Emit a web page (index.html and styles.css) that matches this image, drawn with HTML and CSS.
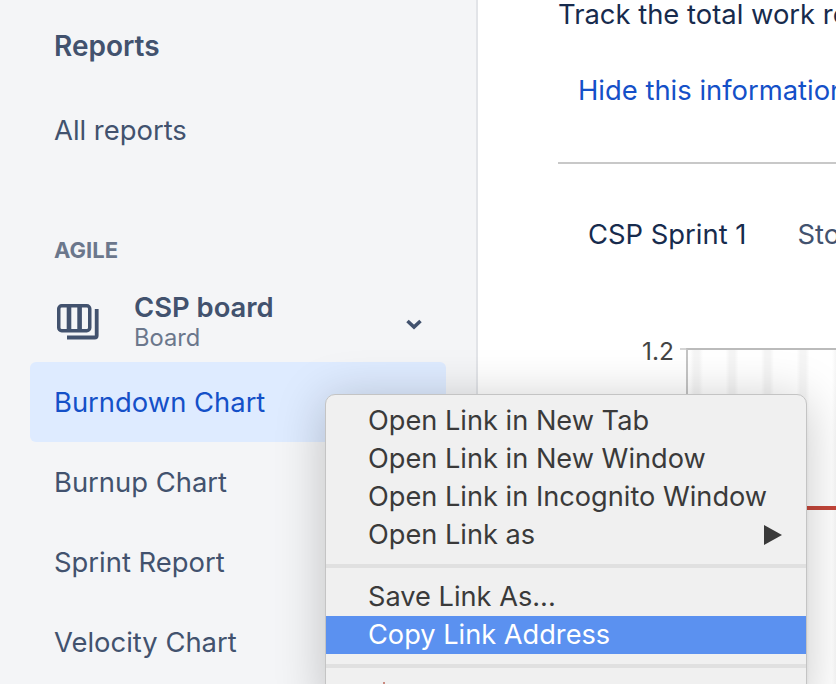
FILE: index.html
```html
<!DOCTYPE html>
<html lang="en">
<head>
<meta charset="utf-8">
<title>Burndown Chart</title>
<link rel="stylesheet" href="styles.css">
</head>
<body>
<div class="page">
  <nav class="sidebar">
    <h2 class="nav-title">Reports</h2>
    <a class="nav-item all">All reports</a>
    <div class="group-label">AGILE</div>
    <div class="board">
      <svg class="board-icon" width="46" height="40" viewBox="0 0 46 40" aria-hidden="true">
        <rect x="2.750" y="2.750" width="31" height="25" rx="3" fill="none" stroke="#42526e" stroke-width="3.500"/>
        <path d="M13 3v25M23.600 3v25" stroke="#42526e" stroke-width="4.600"/>
        <path d="M40.700 6V32.500a2 2 0 0 1-2 2H11" fill="none" stroke="#42526e" stroke-width="3.800"/>
      </svg>
      <div class="board-text">
        <div class="board-name">CSP board</div>
        <div class="board-sub">Board</div>
      </div>
      <svg class="chevron" width="18" height="12" viewBox="0 0 18 12" aria-hidden="true">
        <path d="M2.500 3 9 9l6.500-6" fill="none" stroke="#42526e" stroke-width="3.600"/>
      </svg>
    </div>
    <a class="nav-item active">Burndown Chart</a>
    <a class="nav-item">Burnup Chart</a>
    <a class="nav-item">Sprint Report</a>
    <a class="nav-item">Velocity Chart</a>
  </nav>
  <main class="main">
    <p class="intro">Track the total work remaining</p>
    <a class="hide-link">Hide this information</a>
    <hr class="rule">
    <div class="filters">
      <span class="filter current">CSP Sprint 1</span>
      <span class="filter">Story Points</span>
    </div>
    <div class="chart">
      <span class="tick-label">1.2</span>
      <span class="tick"></span>
      <div class="plot">
        <div class="burn"></div>
      </div>
    </div>
  </main>
</div>
<div class="menu">
  <div class="menu-item">Open Link in New Tab</div>
  <div class="menu-item">Open Link in New Window</div>
  <div class="menu-item">Open Link in Incognito Window</div>
  <div class="menu-item">Open Link as<span class="arrow"></span></div>
  <div class="sep first"></div>
  <div class="menu-item">Save Link As...</div>
  <div class="menu-item selected">Copy Link Address</div>
  <div class="sep second"></div>
  <span class="next-icon"></span>
</div>
</body>
</html>
```

FILE: styles.css
```css
* { box-sizing: border-box; }
html, body { margin: 0; height: 100%; overflow: hidden; }
body { font-family: Inter, "Liberation Sans", sans-serif; background: #fff; }
.page { display: flex; width: 836px; height: 684px; overflow: hidden; }

.sidebar {
  width: 478px; flex: none; height: 684px; background: #f4f5f7;
  border-right: 2px solid #e2e4e8; padding: 26px 30px 0 30px; color: #42526e;
}
.nav-title { margin: 0; padding-left: 24px; font-size: 28px; line-height: 40px; font-weight: 600; }
.nav-item {
  display: flex; align-items: center; width: 416px; height: 80px; padding-left: 24px;
  font-size: 27.400px; color: #42526e; border-radius: 6px;
}
.nav-item.all { margin-top: 24px; }
.nav-item.active { background: #deebff; color: #1450c8; margin-top: 4px; }
.group-label { margin-top: 68px; padding-left: 24px; font-size: 22px; line-height: 24px; font-weight: 700; color: #6b778c; }
.board { display: flex; align-items: center; width: 416px; height: 72px; margin-top: 24px; padding-left: 26px; }
.board-icon { flex: none; margin-top: 2px; }
.board-text { margin-left: 32px; flex: 1; }
.board-name { font-size: 27.400px; line-height: 28px; font-weight: 600; color: #42526e; }
.board-sub { margin-top: 4px; font-size: 23.700px; line-height: 26px; color: #6b778c; }
.chevron { flex: none; margin-right: 23px; margin-top: 4px; }

.main { flex: 1; min-width: 0; padding-left: 80px; overflow: hidden; color: #172b4d; }
.intro { margin: -6px 0 0; font-size: 27.400px; line-height: 40px; white-space: nowrap; }
.hide-link { display: block; margin: 36px 0 0 20px; font-size: 27.400px; line-height: 40px; color: #1450c8; white-space: nowrap; }
.rule { width: 400px; height: 2px; margin: 52px 0 0; border: 0; background: #c8c8c8; }
.filters { display: flex; gap: 51px; margin-top: 50px; padding-left: 30px; font-size: 27.400px; line-height: 40px; white-space: nowrap; }
.filter { color: #42526e; }
.filter.current { color: #172b4d; }
.chart { display: flex; align-items: flex-start; margin-top: 94px; padding-left: 84px; }
.tick-label { font-size: 24.500px; line-height: 28px; color: #444; width: 38px; flex: none; margin-top: -11px; }
.tick { width: 6px; height: 2px; background: #d4d4d4; flex: none; }
.plot {
  flex: none; width: 300px; height: 400px; border-top: 2px solid #bbb; border-left: 2px solid #c4c4c4; position: relative;
  background: repeating-linear-gradient(90deg, #fff 0 2px, #f5f5f5 6px 11px, #fff 15px 35.500px);
}
.burn { position: absolute; top: 156px; left: 0; right: 0; height: 4px; background: #c4463a; }

.menu {
  position: absolute; left: 325px; top: 394px; width: 482px; height: 310px;
  background: #f0f0f0; border: 1px solid #c4c4c4; border-radius: 10px;
  box-shadow: 0 6px 50px rgba(0,0,0,.22); padding-top: 7px;
  font-size: 27.200px; color: #3a3a3a; overflow: hidden;
}
.menu-item { display: flex; align-items: center; height: 38px; padding: 0 24px 1px 42px; white-space: nowrap; }
.menu-item.selected { background: #5b91f0; color: #fff; }
.arrow { margin-left: auto; width: 0; height: 0; border-left: 18px solid #3a3a3a; border-top: 10px solid transparent; border-bottom: 10px solid transparent; }
.sep { height: 4px; background: #e0e0e0; }
.sep.first { margin: 10px 0 10px; }
.sep.second { margin-top: 10px; }
.next-icon { position: absolute; left: 57px; top: 287px; width: 2px; height: 4px; background: #c98a80; }
```
